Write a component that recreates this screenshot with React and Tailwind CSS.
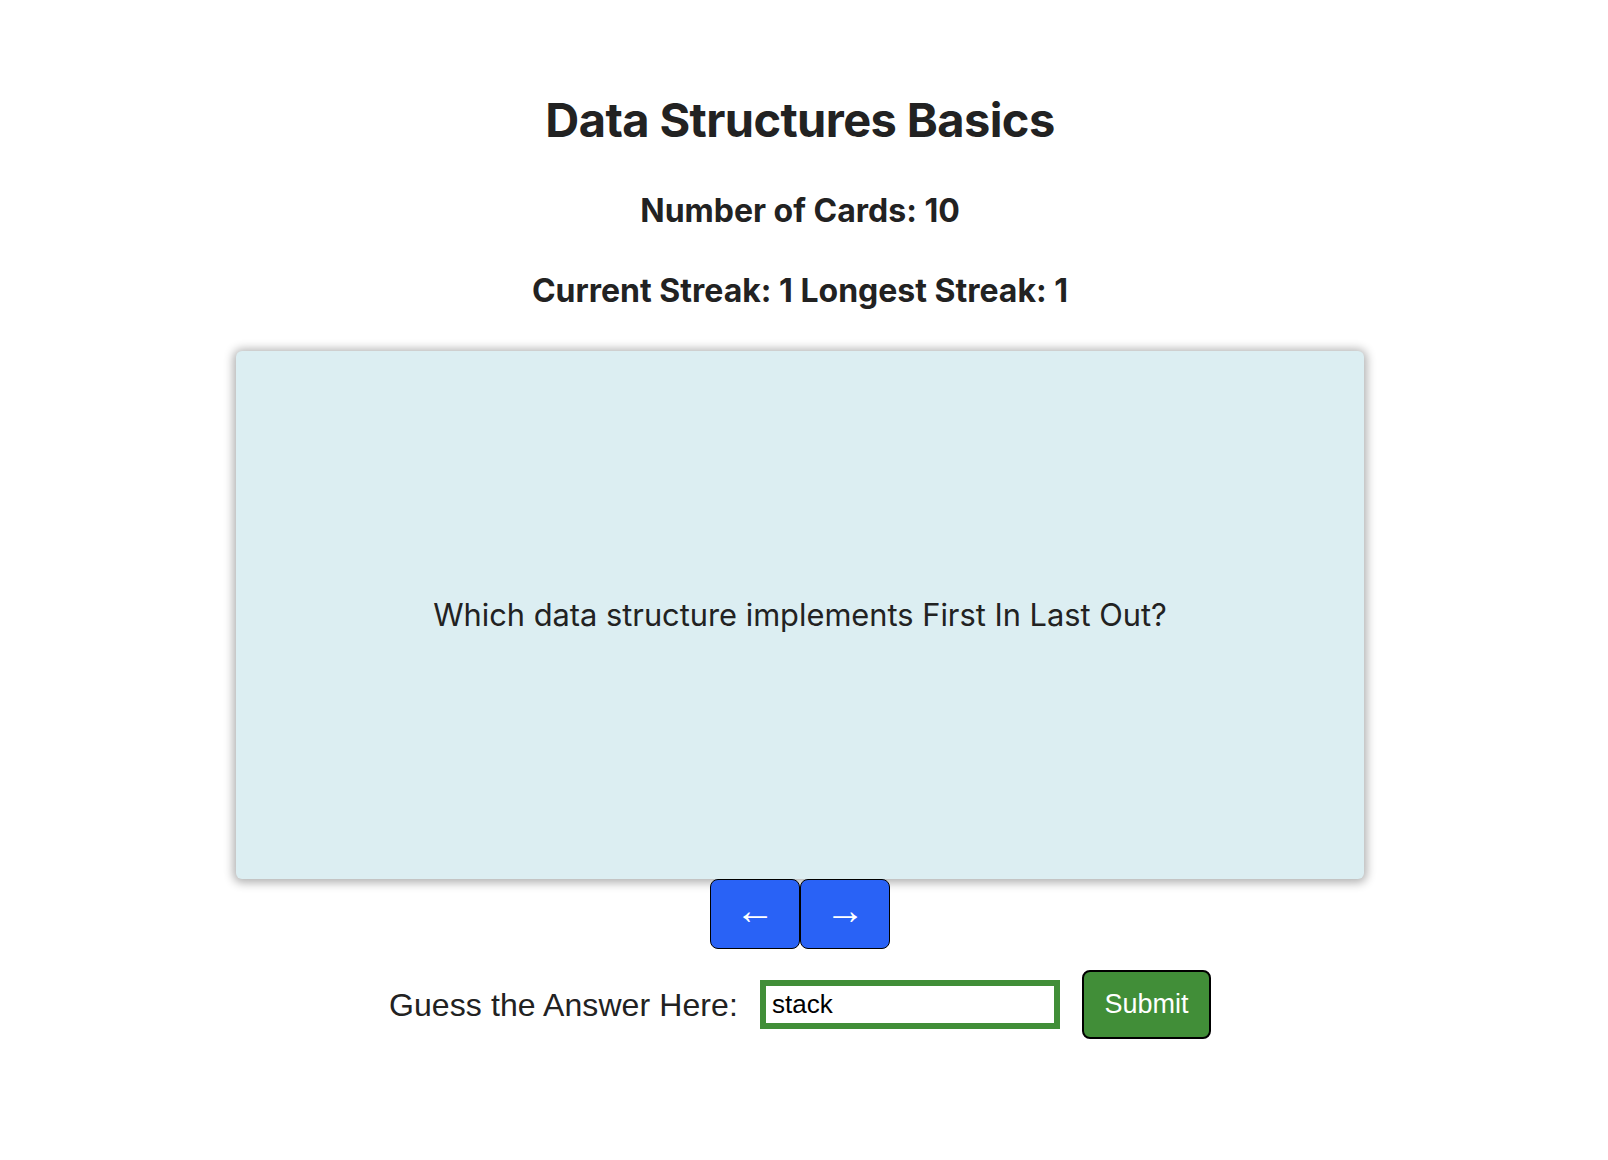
import { useState } from "react";

const App = () => {
    const [guess, setGuess] = useState("stack");

    return (
        <div className="min-h-[1160px] bg-white pr-[8px] flex flex-col items-center font-['Inter',sans-serif] text-[#222222]">
            <h1 className="mt-[88px] text-[47px] leading-[64px] font-bold tracking-[-0.6px]">Data Structures Basics</h1>
            <h3 className="mt-[39px] text-[32px] leading-[40px] font-bold">Number of Cards: 10</h3>
            <h3 className="mt-[40px] text-[32px] leading-[40px] font-bold">Current Streak: 1 Longest Streak: 1</h3>

            <div className="mt-[40px] w-[1128px] h-[528px] rounded-[6px] bg-[#dceef2] shadow-[0_1px_10px_3px_rgba(0,0,0,0.3)] flex items-center justify-center">
                <p className="text-[30.8px] leading-[40px] text-[#222222]">Which data structure implements First In Last Out?</p>
            </div>

            <div className="flex font-['Liberation_Sans',Arial,sans-serif]">
                <button className="w-[90px] h-[70px] rounded-[8px] border-[1.5px] border-black bg-[#2962f6] text-white text-[40px] leading-none font-bold flex items-center justify-center pb-[8px]">&larr;</button>
                <button className="w-[90px] h-[70px] rounded-[8px] border-[1.5px] border-black bg-[#2962f6] text-white text-[40px] leading-none font-bold flex items-center justify-center pb-[8px]">&rarr;</button>
            </div>

            <div className="mt-[21px] flex items-center font-['Liberation_Sans',Arial,sans-serif]">
                <label className="text-[32px] text-[#222222] tracking-[0.1px]">Guess the Answer Here:</label>
                <input
                    value={guess}
                    onChange={(e) => setGuess(e.target.value)}
                    className="ml-[22px] w-[300px] h-[49px] border-[6px] border-[#418e38] px-[6px] text-[26px] text-black outline-none"
                />
                <button className="ml-[22px] w-[129px] h-[69px] rounded-[8px] border-2 border-black bg-[#418e38] text-white text-[27px]">Submit</button>
            </div>
        </div>
    );
};

export default App;
